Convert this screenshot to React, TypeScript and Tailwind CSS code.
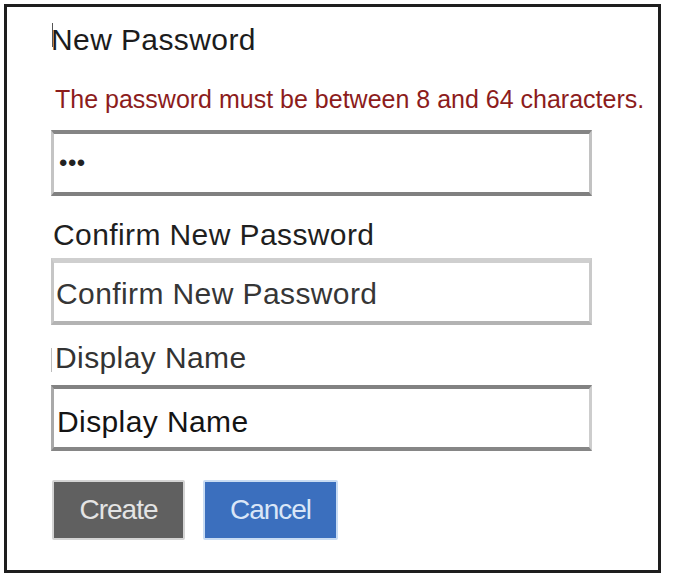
import React from 'react';

export default function App() {
  return (
    <div className="min-h-screen bg-white p-[4px] font-['Liberation_Sans',Arial,sans-serif]">
      <div className="h-[569px] w-[657px] border-[3px] border-[#1e1e1e] pl-[44px] pt-[18px]">
        {/* New Password */}
        <h2 className="relative text-[30px] leading-[30px] tracking-[0.4px] text-[#1c1c1c]">
          <span className="absolute left-[1px] top-[-2px] h-[24px] w-px bg-[#555]" />
          New Password
        </h2>
        <p className="ml-[4px] mt-[32px] text-[25px] leading-[25px] text-[#8c1c1c]">
          The password must be between 8 and 64 characters.
        </p>
        <input
          type="password"
          readOnly
          defaultValue="abc"
          className="mt-[18px] block h-[66px] w-[541px] border-b-[4px] border-l-[3px] border-r-[3px] border-t-[4px] border-b-[#808080] border-l-[#c4c4c4] border-r-[#c2c2c2] border-t-[#858585] bg-white pl-[5px] text-[24px] tracking-[0.5px] text-[#222] outline-none"
        />

        {/* Confirm New Password */}
        <label className="ml-[2px] mt-[24px] block text-[30px] leading-[30px] tracking-[0.4px] text-[#1f1f1f]">
          Confirm New Password
        </label>
        <input
          type="password"
          placeholder="Confirm New Password"
          className="mt-[8px] block h-[67px] w-[541px] border-b-[4px] border-l-[3px] border-r-[3px] border-t-[5px] border-b-[#b3b3b3] border-l-[#c6c6c6] border-r-[#cacaca] border-t-[#cfcfcf] bg-white pl-[2px] pt-[4px] text-[30px] tracking-[0.4px] text-[#333] outline-none placeholder:text-[#363636]"
        />

        {/* Display Name */}
        <label className="relative mt-[18px] block pl-[4px] text-[30px] leading-[30px] tracking-[0.4px] text-[#333]">
          <span className="absolute left-0 top-[5px] h-[24px] w-px bg-[#bdbdbd]" />
          Display Name
        </label>
        <input
          type="text"
          placeholder="Display Name"
          className="mt-[12px] block h-[66px] w-[541px] border-b-[4px] border-l-[3px] border-r-[3px] border-t-[4px] border-b-[#868686] border-l-[#a9a9a9] border-r-[#cdcdcd] border-t-[#828282] bg-white pl-[3px] pt-[8px] text-[30px] tracking-[0.4px] text-[#111] outline-none placeholder:text-[#141414]"
        />

        {/* Actions */}
        <div className="ml-[1px] mt-[29px] flex gap-[18px]">
          <button className="h-[60px] w-[133px] rounded-[2px] border-2 border-[#d4d4d4] bg-[#606060] text-[28px] tracking-[-1px] text-[#e4e4e4]">
            Create
          </button>
          <button className="h-[60px] w-[135px] rounded-[2px] border-2 border-[#c9dcf3] bg-[#3b6fbe] text-[28px] tracking-[-1px] text-[#dae6f7]">
            Cancel
          </button>
        </div>
      </div>
    </div>
  );
}
